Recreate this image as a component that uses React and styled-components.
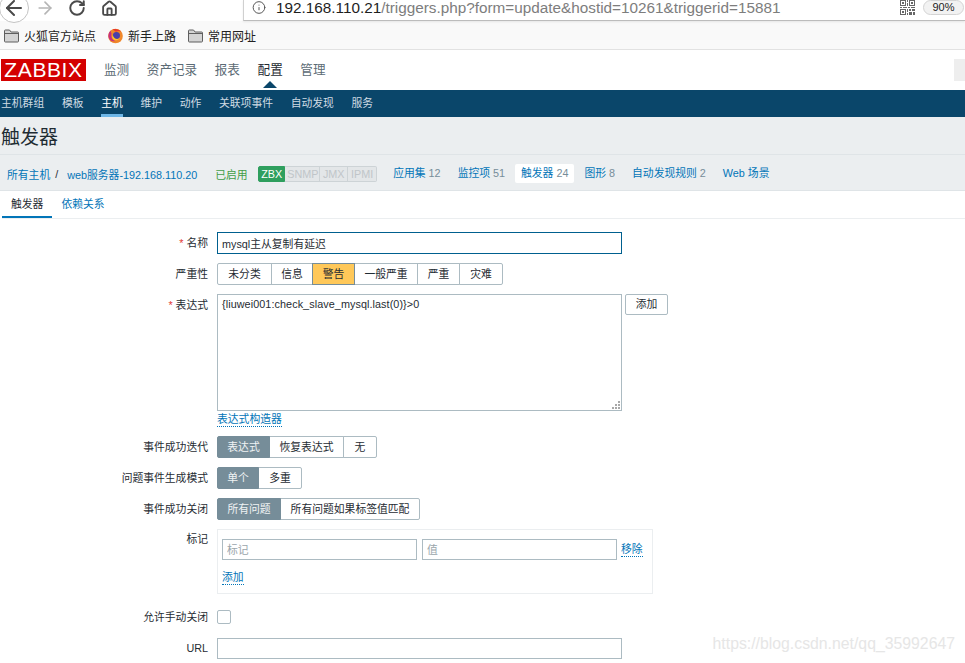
import styled, { createGlobalStyle } from "styled-components";
import { ArrowLeft, ArrowRight, RotateCw, Home, Info } from "lucide-react";

const FONT = `"Liberation Sans", "Noto Sans CJK SC", sans-serif`;

const GlobalStyle = createGlobalStyle`
  html, body {
    margin: 0;
    padding: 0;
    background: #fff;
    font-family: ${FONT};
    font-size: 10.8px;
    color: #1f2c33;
  }
  * { box-sizing: border-box; }
`;

const Page = styled.div`
  position: relative;
  width: 965px;
  height: 663px;
  overflow: hidden;
  background: #fff;
`;

/* browser chrome */
const Toolbar = styled.div`
  display: flex;
  align-items: flex-start;
  height: 21px;
  background: #fff;
`;

const BackCircle = styled.div`
  width: 30px;
  height: 30px;
  margin: -7px 0 0 -1px;
  border: 1px solid #c4c4c4;
  border-radius: 50%;
  display: flex;
  align-items: center;
  justify-content: center;
  color: #4a4a4a;
  flex: none;
  background: #fff;
`;

const ToolIcon = styled.div`
  width: 20px;
  height: 16px;
  margin-left: ${(p) => p.$left}px;
  color: ${(p) => p.$color || "#4a4a4a"};
  display: flex;
  align-items: center;
  justify-content: center;
  flex: none;
`;

const UrlBar = styled.div`
  margin-left: 124px;
  flex: 1;
  height: 21px;
  display: flex;
  align-items: flex-start;
  border-left: 1px solid #d0d0d0;
  border-bottom: 1px solid #bcbcbc;
  box-shadow: 0 1px 2px rgba(0, 0, 0, 0.08);
  padding-left: 8px;
`;

const UrlIcon = styled.div`
  width: 14px;
  height: 15px;
  color: #555;
  display: flex;
  align-items: center;
  flex: none;
`;

const UrlText = styled.div`
  margin-left: 10px;
  font-size: 15.3px;
  line-height: 15px;
  white-space: nowrap;
  color: #7d7d7d;
  flex: none;
  width: 624px;
  b {
    font-weight: normal;
    color: #1e1e1e;
  }
`;

const ZoomPill = styled.div`
  margin-left: 8px;
  width: 41px;
  height: 15px;
  border: 1px solid #d4d4d4;
  border-radius: 8px;
  background: #f2f2f2;
  text-align: center;
  font-size: 11px;
  line-height: 13px;
  color: #222;
  flex: none;
`;

const BookmarkBar = styled.div`
  display: flex;
  align-items: center;
  height: 29px;
  padding: 1px 0 0 4px;
  background: #f9f9f9;
  border-bottom: 1px solid #e2e2e2;
  font-size: 12px;
  color: #222;
`;

const Bookmark = styled.div`
  display: flex;
  align-items: center;
  gap: 5px;
  margin-right: 12px;
  white-space: nowrap;
`;

/* zabbix top nav */
const TopNav = styled.div`
  display: flex;
  align-items: center;
  height: 40px;
  padding-left: 1px;
  background: #fff;
`;

const Logo = styled.div`
  width: 85px;
  height: 22px;
  background: #d40000;
  color: #fff;
  font-size: 21px;
  line-height: 22px;
  text-align: center;
  letter-spacing: 0.6px;
  flex: none;
`;

const TopMenu = styled.div`
  display: flex;
  gap: 17.6px;
  margin-left: 18px;
  padding-bottom: 4px;
  font-size: 12.6px;
  color: #5c6b75;
`;

const TopItem = styled.div`
  position: relative;
  white-space: nowrap;
  color: ${(p) => (p.$active ? "#1f2c33" : "#5c6b75")};
  ${(p) =>
    p.$active &&
    `&::after {
      content: "";
      position: absolute;
      left: 50%;
      margin-left: -7px;
      top: 22px;
      border-left: 7px solid transparent;
      border-right: 7px solid transparent;
      border-bottom: 7px solid #0a466a;
    }`}
`;

const TopSpacer = styled.div`
  flex: 1;
`;

const SearchStub = styled.div`
  width: 11px;
  height: 22px;
  background: #eeeeee;
  flex: none;
`;

const SubNav = styled.div`
  display: flex;
  gap: 17.7px;
  height: 27px;
  padding-left: 1px;
  background: #0a466a;
`;

const SubItem = styled.div`
  height: 27px;
  line-height: 26px;
  white-space: nowrap;
  color: ${(p) => (p.$active ? "#fff" : "#cfdbe3")};
  border-bottom: 3px solid ${(p) => (p.$active ? "#6eb6e6" : "transparent")};
`;

/* page head */
const TitleBar = styled.div`
  height: 38px;
  background: #ebeef0;
  border-bottom: 1px solid #dfe4e7;
  padding-left: 1px;
  font-size: 19px;
  line-height: 41px;
  color: #1f2c33;
`;

const HostNav = styled.div`
  display: flex;
  align-items: center;
  height: 36px;
  padding: 2px 0 0 7px;
  background: #ebeef0;
  border-bottom: 1px solid #dfe4e7;
  white-space: nowrap;
`;

const Crumb = styled.a`
  color: #0275b8;
`;

const CrumbSep = styled.span`
  margin: 0 9px 0 5px;
  color: #1f2c33;
`;

const StatusOn = styled.span`
  margin-left: 18px;
  color: #429e47;
`;

const Badges = styled.div`
  display: flex;
  margin-left: 10.6px;
  margin-right: 16px;
  border-radius: 2px;
`;

const Badge = styled.span`
  height: 16px;
  line-height: 14px;
  padding: 0 2px;
  text-align: center;
  width: ${(p) => p.$w}px;
  font-size: 10.8px;
  border: 1px solid ${(p) => (p.$on ? "#2f9f5e" : "#cdd3d6")};
  border-left-width: ${(p) => (p.$first ? 1 : 0)}px;
  background: ${(p) => (p.$on ? "#2f9f5e" : "#e3e6e8")};
  color: ${(p) => (p.$on ? "#fff" : "#c0c5c8")};
  &:first-child {
    border-radius: 2px 0 0 2px;
  }
  &:last-child {
    border-radius: 0 2px 2px 0;
  }
`;

const HostLink = styled.a`
  display: block;
  color: #0275b8;
  padding: 0 ${(p) => (p.$current ? 6 : 0)}px;
  margin-right: ${(p) => p.$gap}px;
  height: 19px;
  line-height: 19px;
  border-radius: 2px;
  background: ${(p) => (p.$current ? "#fff" : "transparent")};
  span {
    color: #768d99;
    margin-left: 3px;
  }
`;

const TabBar = styled.div`
  display: flex;
  gap: 9px;
  margin-left: 2px;
  height: 28px;
  border-bottom: 1px solid #ebeef0;
`;

const Tab = styled.a`
  height: 27px;
  padding: 0 ${(p) => (p.$active ? 9 : 0)}px;
  line-height: 26px;
  color: ${(p) => (p.$active ? "#1f2c33" : "#0275b8")};
  border-bottom: 2px solid ${(p) => (p.$active ? "#0275b8" : "transparent")};
  font-size: 10.8px;
`;

/* form */
const Form = styled.div`
  display: grid;
  grid-template-columns: 208px 1fr;
  column-gap: 9px;
  row-gap: 9px;
  padding-top: 13px;
  align-items: start;
`;

const Label = styled.label`
  text-align: right;
  line-height: ${(p) => p.$line || 22}px;
  white-space: nowrap;
  em {
    font-style: normal;
    color: #e33734;
    margin-right: 3px;
  }
`;

const TextInput = styled.input`
  display: block;
  width: ${(p) => p.$w || 405}px;
  height: ${(p) => p.$h || 22}px;
  margin: 0;
  padding: 0 4px;
  border: 1px solid ${(p) => (p.$focus ? "#00608f" : "#acbbc2")};
  border-radius: 0;
  outline: none;
  background: #fff;
  font-family: ${FONT};
  font-size: 10.8px;
  color: #1f2c33;
  &::placeholder {
    color: #9aa5ab;
    opacity: 1;
  }
`;

const Segmented = styled.div`
  display: flex;
  height: 22px;
`;

const SegBtn = styled.div`
  position: relative;
  z-index: ${(p) => (p.$color ? 1 : 0)};
  width: ${(p) => p.$w}px;
  margin-left: -1px;
  line-height: 20px;
  text-align: center;
  white-space: nowrap;
  border: 1px solid ${(p) => (p.$color ? "#768d99" : "#acbbc2")};
  background: ${(p) => p.$color || "#fff"};
  color: ${(p) => (p.$color === "#768d99" ? "#f0f3f4" : "#1f2c33")};
  &:first-child {
    margin-left: 0;
    border-radius: 2px 0 0 2px;
  }
  &:last-child {
    border-radius: 0 2px 2px 0;
  }
`;

const ExprRow = styled.div`
  display: flex;
  align-items: flex-start;
  gap: 3px;
`;

const ExprWrap = styled.div`
  position: relative;
  width: 405px;
  height: 117px;
`;

const ExprArea = styled.textarea`
  display: block;
  width: 405px;
  height: 117px;
  margin: 0;
  padding: 2px 4px;
  border: 1px solid #acbbc2;
  border-radius: 0;
  outline: none;
  resize: none;
  font-family: ${FONT};
  font-size: 10.8px;
  letter-spacing: 0.08px;
  line-height: 14px;
  color: #1f2c33;
`;

const Grip = styled.svg`
  position: absolute;
  right: 2px;
  bottom: 2px;
`;

const AddBtn = styled.div`
  width: 43px;
  height: 21px;
  line-height: 19px;
  text-align: center;
  background: #fff;
  border: 1px solid #acbbc2;
  border-radius: 2px;
  color: #1f2c33;
`;

const DottedLink = styled.a`
  display: inline-block;
  color: #0275b8;
  line-height: 13px;
  border-bottom: 1px dotted #0275b8;
`;

const ExprCell = styled.div`
  display: flex;
  flex-direction: column;
  align-items: flex-start;
  gap: 2px;
`;

const TagsBox = styled.div`
  width: 436px;
  height: 65px;
  padding: 9px 0 0 4px;
  border: 1px solid #ebeef0;
  display: flex;
  flex-direction: column;
  align-items: flex-start;
  gap: 11px;
`;

const TagsRow = styled.div`
  display: flex;
  align-items: center;
  gap: 5px;
`;

const RemoveLink = styled(DottedLink)`
  margin-left: -1px;
`;

const Check = styled.div`
  width: 14px;
  height: 14px;
  border: 1px solid #acbbc2;
  border-radius: 2px;
  background: #fff;
`;

const CheckRow = styled.div`
  height: 20px;
  display: flex;
  align-items: center;
  margin: 4px 0 2px;
`;

const CheckLabel = styled(Label)`
  margin-top: 4px;
`;

const Watermark = styled.div`
  position: absolute;
  right: 10px;
  top: 635px;
  font-size: 15.8px;
  line-height: 18px;
  color: #e6e6e6;
  white-space: nowrap;
`;

const FolderIcon = () => (
  <svg width="15" height="14" viewBox="0 0 15 14">
    <path d="M.5 3V1.800C.5 1.300.8 1 1.300 1H5.500l1.600 2h6.600c.5 0 .8.3.8.8v8.400c0 .5-.3.8-.8.8H1.300c-.5 0-.8-.3-.8-.8V3z" fill="#d4d4d4" stroke="#5f5f5f" strokeWidth="1" />
    <path d="M.5 4.500h14" stroke="#5f5f5f" strokeWidth="1" />
  </svg>
);

const FoxIcon = () => (
  <svg width="15" height="16" viewBox="0 0 16 16">
    <circle cx="8" cy="8" r="7.800" fill="#f0872a" />
    <path d="M.4 8C.4 5 1.700 3 3 2c-.3 1.500.2 2.500.8 3C3 7 3.500 12 8 13.500 4 14.500.4 11.500.4 8z" fill="#c6307e" />
    <path d="M5 1c3-1.200 7-.2 9 2.500-2-1-4-.9-5.500 0L5 1z" fill="#e8392c" />
    <circle cx="9" cy="7.500" r="3.800" fill="#4a3fa8" />
    <path d="M5.200 7c.3 3 3 5 6 4 1.500-.6 2.500-2 2.800-3.500-.5 2.900-3 5.500-6 5-3-.4-4.500-3.500-2.800-5.500z" fill="#fbc52b" />
  </svg>
);

const QrIcon = () => (
  <svg width="15" height="15" viewBox="0 0 15 15" fill="#666">
    <path d="M0 0h6v6H0zM1 1v4h4V1zM2 2h2v2H2zM9 0h6v6H9zM10 1v4h4V1zM11 2h2v2h-2zM0 9h6v6H0zM1 10v4h4v-4zM2 11h2v2H2z" fillRule="evenodd" />
    <path d="M7 0h1v2H7zM7 3h1v3H7zM0 7h2v1H0zM3 7h4v1H3zM8 7h2v1H8zM11 7h4v1h-4zM9 9h2v2H9zM12 9h3v2h-3zM7 9h1v3H7zM9 12h3v3H9zM13 12h2v3h-2zM7 13h1v2H7z" />
  </svg>
);

export default function App() {
  return (
    <Page>
      <GlobalStyle />
      <Toolbar>
        <BackCircle>
          <ArrowLeft size={24} strokeWidth={2} />
        </BackCircle>
        <ToolIcon $left={6} $color="#b5b5b5">
          <ArrowRight size={24} strokeWidth={2} />
        </ToolIcon>
        <ToolIcon $left={12}>
          <RotateCw size={18} strokeWidth={2.6} />
        </ToolIcon>
        <ToolIcon $left={12}>
          <Home size={17} strokeWidth={2.6} />
        </ToolIcon>
        <UrlBar>
          <UrlIcon>
            <Info size={15} strokeWidth={1.7} />
          </UrlIcon>
          <UrlText>
            <b>192.168.110.21</b>/triggers.php?form=update&amp;hostid=10261&amp;triggerid=15881
          </UrlText>
          <QrIcon />
          <ZoomPill>90%</ZoomPill>
        </UrlBar>
      </Toolbar>
      <BookmarkBar>
        <Bookmark>
          <FolderIcon />
          火狐官方站点
        </Bookmark>
        <Bookmark>
          <FoxIcon />
          新手上路
        </Bookmark>
        <Bookmark>
          <FolderIcon />
          常用网址
        </Bookmark>
      </BookmarkBar>

      <TopNav>
        <Logo>ZABBIX</Logo>
        <TopMenu>
          <TopItem>监测</TopItem>
          <TopItem>资产记录</TopItem>
          <TopItem>报表</TopItem>
          <TopItem $active>配置</TopItem>
          <TopItem>管理</TopItem>
        </TopMenu>
        <TopSpacer />
        <SearchStub />
      </TopNav>
      <SubNav>
        <SubItem>主机群组</SubItem>
        <SubItem>模板</SubItem>
        <SubItem $active>主机</SubItem>
        <SubItem>维护</SubItem>
        <SubItem>动作</SubItem>
        <SubItem>关联项事件</SubItem>
        <SubItem>自动发现</SubItem>
        <SubItem>服务</SubItem>
      </SubNav>

      <TitleBar>触发器</TitleBar>
      <HostNav>
        <Crumb>所有主机</Crumb>
        <CrumbSep>/</CrumbSep>
        <Crumb>web服务器-192.168.110.20</Crumb>
        <StatusOn>已启用</StatusOn>
        <Badges>
          <Badge $on $first $w={27}>ZBX</Badge>
          <Badge $w={35}>SNMP</Badge>
          <Badge $w={28}>JMX</Badge>
          <Badge $w={29}>IPMI</Badge>
        </Badges>
        <HostLink $gap={17}>应用集<span>12</span></HostLink>
        <HostLink $gap={10}>监控项<span>51</span></HostLink>
        <HostLink $current $gap={10}>触发器<span>24</span></HostLink>
        <HostLink $gap={17}>图形<span>8</span></HostLink>
        <HostLink $gap={17}>自动发现规则<span>2</span></HostLink>
        <HostLink $gap={0}>Web 场景</HostLink>
      </HostNav>
      <TabBar>
        <Tab $active>触发器</Tab>
        <Tab>依赖关系</Tab>
      </TabBar>

      <Form>
        <Label><em>*</em>名称</Label>
        <TextInput $focus defaultValue="mysql主从复制有延迟" />

        <Label>严重性</Label>
        <Segmented>
          <SegBtn $w={55}>未分类</SegBtn>
          <SegBtn $w={42}>信息</SegBtn>
          <SegBtn $w={43} $color="#ffc859">警告</SegBtn>
          <SegBtn $w={64}>一般严重</SegBtn>
          <SegBtn $w={43}>严重</SegBtn>
          <SegBtn $w={44}>灾难</SegBtn>
        </Segmented>

        <Label><em>*</em>表达式</Label>
        <ExprCell>
          <ExprRow>
            <ExprWrap>
              <ExprArea defaultValue="{liuwei001:check_slave_mysql.last(0)}>0" />
              <Grip width="8" height="8" viewBox="0 0 8 8" fill="#a8a8a8">
                <rect x="6" y="0" width="2" height="2" />
                <rect x="3" y="3" width="2" height="2" />
                <rect x="6" y="3" width="2" height="2" />
                <rect x="0" y="6" width="2" height="2" />
                <rect x="3" y="6" width="2" height="2" />
                <rect x="6" y="6" width="2" height="2" />
              </Grip>
            </ExprWrap>
            <AddBtn>添加</AddBtn>
          </ExprRow>
          <DottedLink>表达式构造器</DottedLink>
        </ExprCell>

        <Label>事件成功迭代</Label>
        <Segmented>
          <SegBtn $w={53} $color="#768d99">表达式</SegBtn>
          <SegBtn $w={75}>恢复表达式</SegBtn>
          <SegBtn $w={34}>无</SegBtn>
        </Segmented>

        <Label>问题事件生成模式</Label>
        <Segmented>
          <SegBtn $w={42} $color="#768d99">单个</SegBtn>
          <SegBtn $w={44}>多重</SegBtn>
        </Segmented>

        <Label>事件成功关闭</Label>
        <Segmented>
          <SegBtn $w={64} $color="#768d99">所有问题</SegBtn>
          <SegBtn $w={140}>所有问题如果标签值匹配</SegBtn>
        </Segmented>

        <Label $line={21}>标记</Label>
        <TagsBox>
          <TagsRow>
            <TextInput $w={195} $h={21} placeholder="标记" />
            <TextInput $w={195} $h={21} placeholder="值" />
            <RemoveLink>移除</RemoveLink>
          </TagsRow>
          <DottedLink>添加</DottedLink>
        </TagsBox>

        <CheckLabel $line={20}>允许手动关闭</CheckLabel>
        <CheckRow>
          <Check />
        </CheckRow>

        <Label $line={21}>URL</Label>
        <TextInput $h={21} />
      </Form>
      <Watermark>https://blog.csdn.net/qq_35992647</Watermark>
    </Page>
  );
}
